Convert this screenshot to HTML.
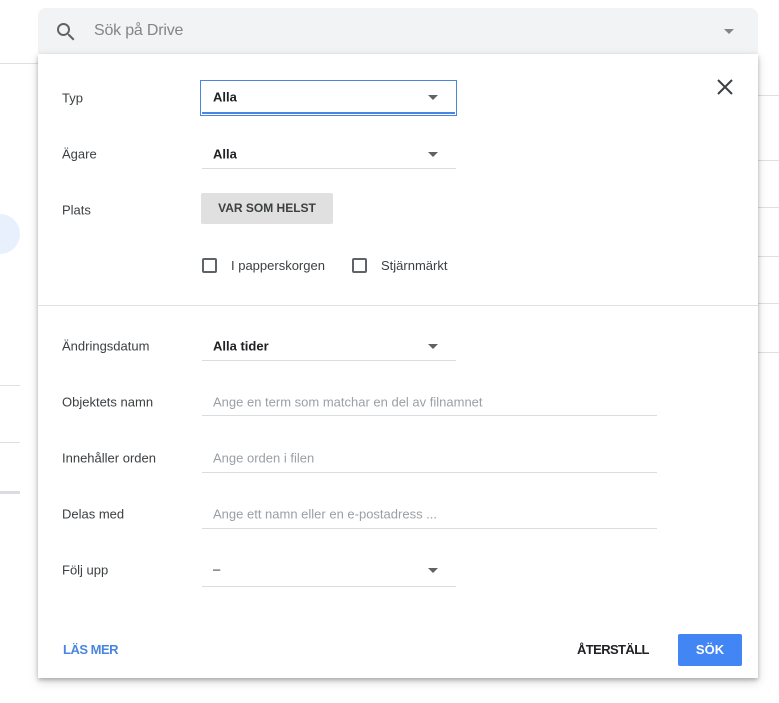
<!DOCTYPE html>
<html><head><meta charset="utf-8"><style>
*{margin:0;padding:0;box-sizing:border-box}
body{width:779px;height:703px;background:#fff;position:relative;overflow:hidden;font-family:"Liberation Sans",Arial,sans-serif;font-size:13px;color:#3c4043}
.a{position:absolute}
.hl{position:absolute;height:1px;background:#e0e0e0}
.lbl{position:absolute;left:62px;font-size:13px;color:#3c4043;transform:translateY(-50%)}
.ul{position:absolute;height:1px;background:#dadce0}
.val{position:absolute;left:213px;font-size:13px;font-weight:bold;color:#202124;transform:translateY(-50%)}
.ph{position:absolute;left:213px;font-size:13px;color:#9aa0a6;transform:translateY(-50%)}
.tri{position:absolute;left:428px;width:0;height:0;border-left:5px solid transparent;border-right:5px solid transparent;border-top:5px solid #5f6368}
</style></head><body>
<div class="hl" style="left:0;top:63px;width:38px"></div>
<div class="a" style="left:-20px;top:214px;width:40px;height:40px;border-radius:50%;background:#e8f0fe"></div>
<div class="hl" style="left:0;top:385px;width:20px"></div>
<div class="hl" style="left:0;top:442px;width:20px"></div>
<div class="a" style="left:0;top:491px;width:20px;height:3px;background:#dadce0"></div>
<div class="hl" style="left:758px;top:95px;width:21px"></div>
<div class="hl" style="left:758px;top:160px;width:21px"></div>
<div class="hl" style="left:758px;top:207px;width:21px"></div>
<div class="hl" style="left:758px;top:256px;width:21px"></div>
<div class="hl" style="left:758px;top:303px;width:21px"></div>
<div class="hl" style="left:758px;top:352px;width:21px"></div>

<div class="a" style="left:38px;top:8px;width:720px;height:50px;background:#f1f3f4;border-radius:8px 8px 0 0"></div>
<svg class="a" style="left:54px;top:20px" width="24" height="24" viewBox="0 0 24 24"><path d="M15.5 14h-.79l-.28-.27A6.47 6.470 0 0 0 16 9.5 6.5 6.5 0 1 0 9.5 16c1.61 0 3.09-.59 4.230-1.57l.27.28v.79l5 4.99L20.49 19l-4.99-5zm-6 0C7.01 14 5 11.99 5 9.5S7.01 5 9.5 5 14 7.01 14 9.5 11.99 14 9.5 14z" fill="#5f6368"/></svg>
<div class="a" style="left:94px;top:22px;font-size:16px;color:#80868b;letter-spacing:-0.2px">Sök på Drive</div>
<div class="a" style="left:724px;top:29px;border-left:5px solid transparent;border-right:5px solid transparent;border-top:5px solid #80868b"></div>

<div class="a" style="left:38px;top:54px;width:720px;height:624px;background:#fff;box-shadow:0 2px 4px rgba(0,0,0,.25),0 4px 10px rgba(0,0,0,.15)"></div>
<svg class="a" style="left:716px;top:78px" width="18" height="18" viewBox="0 0 18 18"><path d="M2 2L16 16M16 2L2 16" stroke="#3c4043" stroke-width="2"/></svg>

<div class="lbl" style="top:98px">Typ</div>
<div class="a" style="left:200px;top:80px;width:257px;height:36px;border:1px solid #4a86e0"></div>
<div class="a" style="left:202px;top:112px;width:253px;height:2px;background:#4a86e0"></div>
<div class="val" style="top:97px">Alla</div>
<div class="tri" style="top:95px"></div>

<div class="lbl" style="top:154px">Ägare</div>
<div class="val" style="top:154px">Alla</div>
<div class="tri" style="top:152px"></div>
<div class="ul" style="left:202px;top:168px;width:254px"></div>

<div class="lbl" style="top:210px">Plats</div>
<div class="a" style="left:201px;top:193px;width:132px;height:31px;background:#e0e0e0;border-radius:2px;font-size:12px;font-weight:bold;color:#3c4043;text-align:center;line-height:31px">VAR SOM HELST</div>

<div class="a" style="left:202px;top:258px;width:15px;height:15px;border:2px solid #5f6368;border-radius:2px"></div>
<div class="a" style="left:231px;top:258px;font-size:13px;color:#3c4043">I papperskorgen</div>
<div class="a" style="left:352px;top:258px;width:15px;height:15px;border:2px solid #5f6368;border-radius:2px"></div>
<div class="a" style="left:381px;top:258px;font-size:13px;color:#3c4043">Stjärnmärkt</div>

<div class="hl" style="left:38px;top:305px;width:720px"></div>

<div class="lbl" style="top:346px">Ändringsdatum</div>
<div class="val" style="top:346px">Alla tider</div>
<div class="tri" style="top:344px"></div>
<div class="ul" style="left:202px;top:360px;width:254px"></div>

<div class="lbl" style="top:402px">Objektets namn</div>
<div class="ph" style="top:402px">Ange en term som matchar en del av filnamnet</div>
<div class="ul" style="left:202px;top:415px;width:455px"></div>

<div class="lbl" style="top:458px">Innehåller orden</div>
<div class="ph" style="top:458px">Ange orden i filen</div>
<div class="ul" style="left:202px;top:472px;width:455px"></div>

<div class="lbl" style="top:514px">Delas med</div>
<div class="ph" style="top:514px">Ange ett namn eller en e-postadress ...</div>
<div class="ul" style="left:202px;top:528px;width:455px"></div>

<div class="lbl" style="top:570px">Följ upp</div>
<div class="val" style="top:569px;font-weight:normal">–</div>
<div class="tri" style="top:568px"></div>
<div class="ul" style="left:202px;top:586px;width:254px"></div>

<div class="a" style="left:63px;top:642px;font-size:13px;font-weight:bold;color:#4a86e0;letter-spacing:-0.5px">LÄS MER</div>
<div class="a" style="left:577px;top:642px;font-size:13px;font-weight:bold;color:#202124;letter-spacing:-0.6px">ÅTERSTÄLL</div>
<div class="a" style="left:678px;top:634px;width:64px;height:32px;background:#4285f4;border-radius:2px;color:#fff;font-weight:bold;font-size:13px;text-align:center;line-height:32px">SÖK</div>
</body></html>
